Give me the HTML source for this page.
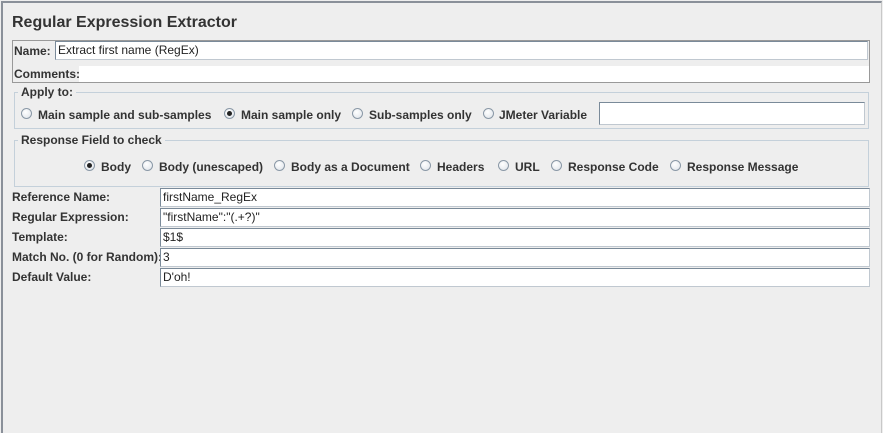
<!DOCTYPE html>
<html><head><style>
body{margin:0;width:883px;height:426px;background:#eeeeee;position:relative;overflow:hidden;font-family:"Liberation Sans",Arial,sans-serif;font-size:12px;font-weight:bold;color:#333;}
.a{position:absolute;white-space:nowrap;}
.frame{position:absolute;left:1px;top:1px;width:878px;height:430px;border-top:2px solid #8a9099;border-left:2px solid #8a9099;border-right:1px solid #c8c8c8;}
.in{position:absolute;background:#fff;border:1px solid #7a8a99;border-right-color:#c0c8d0;border-bottom-color:#c0c8d0;font-weight:normal;color:#222;box-sizing:border-box;padding-left:2px;line-height:16px;}
.grp{position:absolute;border:1px solid #c4d0da;}
.leg{position:absolute;background:#eeeeee;padding:0 3px;}
.r{position:absolute;width:11px;height:11px;border-radius:50%;border:1px solid #8a98a6;background:radial-gradient(circle at 40% 35%,#fff,#dde2e8);box-sizing:border-box;}
.r.on::after{content:"";position:absolute;left:2px;top:2px;width:5px;height:5px;border-radius:50%;background:#222;}
</style></head><body>
<div class="frame"></div>
<div class="a" style="left:12px;top:14px;font-size:16px;color:#333">Regular Expression Extractor</div>
<div class="a" style="left:12px;top:40px;width:856px;height:41px;border:1px solid #999;"></div>
<div class="a" style="left:79px;top:66px;width:790px;height:16px;background:#fff"></div>
<div class="a" style="left:14px;top:44px">Name:</div>
<div class="in" style="left:55px;top:41px;width:813px;height:19px">Extract first name (RegEx)</div>
<div class="a" style="left:14px;top:67px">Comments:</div>

<div class="grp" style="left:14px;top:92px;width:853px;height:35px"></div>
<div class="leg a" style="left:18px;top:85px">Apply to:</div>
<div class="r" style="left:21px;top:108px"></div><div class="a" style="left:38px;top:108px">Main sample and sub-samples</div>
<div class="r on" style="left:224px;top:108px"></div><div class="a" style="left:241px;top:108px">Main sample only</div>
<div class="r" style="left:352px;top:108px"></div><div class="a" style="left:369px;top:108px">Sub-samples only</div>
<div class="r" style="left:483px;top:108px"></div><div class="a" style="left:499px;top:108px">JMeter Variable</div>
<div class="in" style="left:599px;top:102px;width:266px;height:23px"></div>

<div class="grp" style="left:14px;top:140px;width:853px;height:45px"></div>
<div class="leg a" style="left:18px;top:133px">Response Field to check</div>
<div class="r on" style="left:84px;top:160px"></div><div class="a" style="left:101px;top:160px">Body</div>
<div class="r" style="left:142px;top:160px"></div><div class="a" style="left:159px;top:160px">Body (unescaped)</div>
<div class="r" style="left:274px;top:160px"></div><div class="a" style="left:291px;top:160px">Body as a Document</div>
<div class="r" style="left:420px;top:160px"></div><div class="a" style="left:437px;top:160px">Headers</div>
<div class="r" style="left:498px;top:160px"></div><div class="a" style="left:515px;top:160px">URL</div>
<div class="r" style="left:551px;top:160px"></div><div class="a" style="left:568px;top:160px">Response Code</div>
<div class="r" style="left:670px;top:160px"></div><div class="a" style="left:687px;top:160px">Response Message</div>

<div class="a" style="left:12px;top:190px">Reference Name:</div>
<div class="in" style="left:160px;top:188px;width:710px;height:19px">firstName_RegEx</div>
<div class="a" style="left:12px;top:210px">Regular Expression:</div>
<div class="in" style="left:160px;top:208px;width:710px;height:19px">"firstName":"(.+?)"</div>
<div class="a" style="left:12px;top:230px">Template:</div>
<div class="in" style="left:160px;top:228px;width:710px;height:19px">$1$</div>
<div class="a" style="left:12px;top:250px">Match No. (0 for Random):</div>
<div class="in" style="left:160px;top:248px;width:710px;height:19px">3</div>
<div class="a" style="left:12px;top:270px">Default Value:</div>
<div class="in" style="left:160px;top:268px;width:710px;height:19px">D'oh!</div>
</body></html>
